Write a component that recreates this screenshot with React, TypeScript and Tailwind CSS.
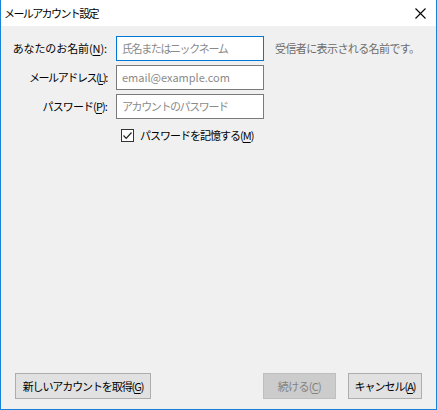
import React from "react";

const font = { fontFamily: '"Noto Sans CJK JP", "Noto Sans", sans-serif' };

function U({ k }: { k: string }) {
  return <span className="underline underline-offset-2">{k}</span>;
}

export default function App() {
  return (
    <div
      style={font}
      className="w-[437px] h-[410px] flex flex-col border-x border-b border-[#1883d7] bg-[#f0f0f0] text-black whitespace-nowrap"
    >
      <div className="h-[26px] bg-white flex items-center justify-between pl-[3px] pr-[10px]">
        <span className="text-[11px] tracking-[-1.6px]">メールアカウント設定</span>
        <svg width="11" height="11" viewBox="0 0 11 11" className="mt-[1px]">
          <path d="M0.5 0.5 L10.5 10.5 M10.5 0.5 L0.5 10.5" stroke="#000" strokeWidth="1.1" fill="none" />
        </svg>
      </div>
      <div className="flex-1 flex flex-col justify-between pt-[10px] pb-[10px] px-[14px]">
        <div className="flex flex-col">
          <div className="flex flex-col gap-[4px] -ml-[14px]">
            <div className="flex items-center gap-[9px]">
              <div className="w-[106px] text-right text-[11px] leading-[25px] tracking-[-0.1px]">
                あなたのお名前(<U k="N" />):
              </div>
              <div className="w-[148px] h-[25px] border border-[#0078d7] bg-white flex items-center pl-[5px] text-[11px] text-[#8a8a8a] tracking-[-1.4px]">
                氏名またはニックネーム
              </div>
              <span className="ml-[2px] text-[11px] text-[#6d6d6d] tracking-[-0.6px]">受信者に表示される名前です。</span>
            </div>
            <div className="flex items-center gap-[9px]">
              <div className="w-[106px] text-right text-[11px] leading-[25px] tracking-[-1.4px]">
                メールアドレス(<U k="L" />):
              </div>
              <div className="w-[148px] h-[25px] border border-[#7a7a7a] bg-white flex items-center pl-[5px] text-[11px] text-[#8a8a8a]">
                email@example.com
              </div>
            </div>
            <div className="flex items-center gap-[9px]">
              <div className="w-[106px] text-right text-[11px] leading-[25px] tracking-[-0.9px]">
                パスワード(<U k="P" />):
              </div>
              <div className="w-[148px] h-[25px] border border-[#7a7a7a] bg-white flex items-center pl-[5px] text-[11px] text-[#8a8a8a] tracking-[-1.4px]">
                アカウントのパスワード
              </div>
            </div>
          </div>
          <div className="flex items-center gap-[6px] mt-[8px] ml-[106px]">
            <div className="w-[13px] h-[13px] border border-[#333] bg-white flex items-center justify-center">
              <svg width="11" height="11" viewBox="0 0 11 11">
                <path d="M1.5 5.5 L4.2 8.3 L9.5 2.5" stroke="#222" strokeWidth="1.2" fill="none" />
              </svg>
            </div>
            <span className="text-[11px] tracking-[-1px]">
              パスワードを記憶する(<U k="M" />)
            </span>
          </div>
        </div>
        <div className="flex items-center">
          <button className="h-[26px] w-[136px] border border-[#adadad] bg-[#e1e1e1] text-[11px] tracking-[-1.1px]">
            新しいアカウントを取得(<U k="G" />)
          </button>
          <div className="flex-1" />
          <button className="h-[26px] w-[73px] border border-[#bfbfbf] bg-[#cccccc] text-[11px] text-[#838383] tracking-[-0.7px]">
            続ける(<U k="C" />)
          </button>
          <button className="ml-[12px] h-[26px] w-[74px] border border-[#adadad] bg-[#e1e1e1] text-[11px] tracking-[-1px]">
            キャンセル(<U k="A" />)
          </button>
        </div>
      </div>
    </div>
  );
}
